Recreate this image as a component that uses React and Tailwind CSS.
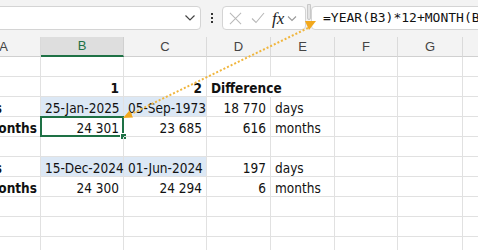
import React from "react";

const W = [74, 83, 83, 64, 64, 63, 65, 64];
const HEAD = ["A", "B", "C", "D", "E", "F", "G", "H"];

const ROWS = [
  {},
  { 1: { t: "1", b: 1, r: 1 }, 2: { t: "2", b: 1, r: 1 }, 3: { t: "Difference", b: 1, noRight: 1 } },
  { 0: { t: "Dates", b: 1, r: 1, pr: 38 }, 1: { t: "25-Jan-2025", r: 1, blue: 1 }, 2: { t: "05-Sep-1973", r: 1, blue: 1 }, 3: { t: "18 770", r: 1 }, 4: { t: "days" } },
  { 0: { t: "Total months", b: 1, r: 1, pr: 3 }, 1: { t: "24 301", r: 1, sel: 1 }, 2: { t: "23 685", r: 1 }, 3: { t: "616", r: 1 }, 4: { t: "months" } },
  {},
  { 0: { t: "Dates", b: 1, r: 1, pr: 38 }, 1: { t: "15-Dec-2024", r: 1, blue: 1 }, 2: { t: "01-Jun-2024", r: 1, blue: 1 }, 3: { t: "197", r: 1 }, 4: { t: "days" } },
  { 0: { t: "Total months", b: 1, r: 1, pr: 3 }, 1: { t: "24 300", r: 1 }, 2: { t: "24 294", r: 1 }, 3: { t: "6", r: 1 }, 4: { t: "months" } },
  {},
  {},
  {},
];

function Cell({ w, c }) {
  const cls = [
    "relative shrink-0 h-[20px] border-b border-[#e1e1e1] px-[4px] pt-[2px] leading-[19px] whitespace-nowrap text-[13.5px] text-[#111]",
    c && c.noRight ? "border-r border-r-transparent z-10" : "border-r border-[#e1e1e1]",
    c && c.blue ? "bg-[#dce8f5]" : "",
    c && c.r ? "text-right" : "text-left",
    c && c.b ? "font-bold" : "",
    c && c.pr ? "flex justify-end overflow-visible" : "",
  ].join(" ");
  const style = { width: w };
  if (c && c.pr) style.paddingRight = c.pr;
  return (
    <div className={cls} style={style}>
      {c && c.t}
      {c && c.sel && (
        <div className="absolute left-[-1px] top-[-1px] right-[-1px] bottom-[-1px] border-2 border-[#1e7145] pointer-events-none">
          <div className="absolute right-[-5px] bottom-[-5px] w-[7px] h-[7px] bg-[#1e7145] border border-white"></div>
        </div>
      )}
    </div>
  );
}

export default function App() {
  return (
    <div className="relative w-[478px] h-[250px] overflow-hidden bg-white font-[family-name:'Liberation_Sans_Narrow','DejaVu_Sans_Condensed',Roboto,sans-serif]">
      {/* toolbar */}
      <div className="h-[37px] bg-[#f3f3f3] flex items-start pt-[6px] font-[family-name:'Liberation_Sans',sans-serif]">
        <div className="shrink-0 ml-[-20px] w-[221px] h-[24px] bg-white border border-[#d4d4d4] rounded-[4px] flex items-center justify-end pr-[4px]">
          <svg width="12" height="8" viewBox="0 0 12 8" fill="none" stroke="#444" strokeWidth="1.2">
            <path d="M1.5 1.5 L6 6 L10.5 1.5" />
          </svg>
        </div>
        <div className="shrink-0 w-[21px] h-[24px] flex flex-col items-center justify-center gap-[2px]">
          <div className="w-[2px] h-[2px] bg-[#333]"></div>
          <div className="w-[2px] h-[2px] bg-[#333]"></div>
          <div className="w-[2px] h-[2px] bg-[#333]"></div>
        </div>
        <div className="shrink-0 w-[84px] h-[24px] bg-white border border-[#d4d4d4] rounded-[4px] flex items-center pl-[6px]">
          <svg width="13" height="13" viewBox="0 0 14 14" fill="none" stroke="#b8b8b8" strokeWidth="1.1">
            <path d="M1 1 L13 13 M13 1 L1 13" />
          </svg>
          <svg className="ml-[9px]" width="14" height="12" viewBox="0 0 14 12" fill="none" stroke="#b8b8b8" strokeWidth="1.1">
            <path d="M1 6.5 L5 10.5 L13 1" />
          </svg>
          <span className="ml-[7px] text-[17px] leading-none italic text-[#222] font-[family-name:'Liberation_Serif',serif]">fx</span>
          <svg className="ml-[3px]" width="10" height="7" viewBox="0 0 10 7" fill="none" stroke="#999" strokeWidth="1.1">
            <path d="M1 1.5 L5 5.5 L9 1.5" />
          </svg>
        </div>
        <div className="shrink-0 w-[5px] h-[24px] flex justify-center">
          <div className="w-[4px] h-[16px] mt-[-2px] bg-[#e4e4e4] border border-[#c8c8c8] rounded-b-[2px]"></div>
        </div>
        <div className="shrink-0 w-[300px] h-[24px] bg-white border border-[#d4d4d4] rounded-[4px] flex items-center pl-[11px] text-[13px] text-[#111] font-[family-name:'DejaVu_Sans_Mono',monospace] whitespace-nowrap overflow-hidden">
          =YEAR(B3)*12+MONTH(B3)
        </div>
      </div>

      {/* grid */}
      <div className="ml-[-33px]">
        <div className="flex h-[20px] bg-[#f3f3f3] font-[family-name:'Liberation_Sans',sans-serif]">
          {HEAD.map((h, i) => (
            <div
              key={h}
              className={
                "shrink-0 h-[20px] flex items-center justify-center text-[13px] border-r " +
                (i === 1
                  ? "bg-[#dedede] text-[#1e7145] border-b-2 border-b-[#1e7145] border-r-[#d0d0d0]"
                  : "text-[#444] border-b border-b-[#d0d0d0] border-r-[#dadada]")
              }
              style={{ width: W[i] }}
            >
              {h}
            </div>
          ))}
        </div>
        {ROWS.map((row, ri) => (
          <div key={ri} className="flex">
            {W.map((w, ci) => (
              <Cell key={ci} w={w} c={row[ci]} />
            ))}
          </div>
        ))}
      </div>

      {/* trace arrow overlay */}
      <svg className="absolute left-0 top-0 pointer-events-none" width="478" height="250" viewBox="0 0 478 250">
        <path d="M305 21 L316 21 L309 30 Z" fill="#f2a81d" />
        <line x1="308" y1="28" x2="131" y2="114" stroke="#f0b53c" strokeWidth="2" strokeDasharray="2 2" />
        <path d="M123 118 L133 117.5 L129.5 110.5 Z" fill="#f2a81d" />
      </svg>
    </div>
  );
}
